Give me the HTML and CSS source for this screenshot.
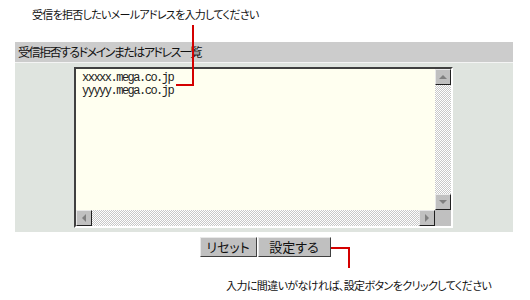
FILE: index.html
```html
<!DOCTYPE html>
<html>
<head>
    <title>受信拒否設定</title>
    <link rel="stylesheet" href="styles.css">
</head>
<body>
    <div class="page">
        <p class="note note-top">受信を拒否したいメールアドレスを入力してください</p>

        <div class="list">
            <div class="list-head">受信拒否するドメインまたはアドレス一覧</div>
            <div class="list-body">
                <div class="box">
                    <div class="box-text">xxxxx.mega.co.jp<br>yyyyy.mega.co.jp</div>
                    <div class="vbar">
                        <span class="sbtn"><span class="arr arr-up"></span></span>
                        <span class="track"></span>
                        <span class="sbtn"><span class="arr arr-down"></span></span>
                    </div>
                    <div class="hbar">
                        <span class="sbtn"><span class="arr arr-left"></span></span>
                        <span class="track"></span>
                        <span class="sbtn"><span class="arr arr-right"></span></span>
                    </div>
                    <div class="corner"></div>
                </div>
            </div>
        </div>

        <div class="actions">
            <button class="btn btn-reset">リセット</button>
            <button class="btn btn-submit">設定する</button>
        </div>

        <p class="note note-bottom">入力に間違いがなければ、設定ボタンをクリックしてください</p>

        <!-- callout lines -->
        <div class="line line-a1"></div>
        <div class="line line-a2"></div>
        <div class="line line-b1"></div>
        <div class="line line-b2"></div>
    </div>
</body>
</html>
```

FILE: styles.css
```css
body {
    margin: 0;
    background: #fff;
    font-family: "Noto Sans CJK JP", sans-serif;
    color: #000;
}

.page {
    position: relative;
    width: 530px;
    height: 300px;
}

.note {
    margin: 0;
    font-size: 11px;
    line-height: 14px;
    font-feature-settings: "palt";
    letter-spacing: -0.7px;
    color: #111;
}

.note-top {
    padding: 7px 0 0 32px;
    height: 14px;
}

.list {
    margin: 21px 0 0 15px;
    width: 498px;
}

.list-head {
    height: 20px;
    line-height: 20px;
    padding-left: 3px;
    background: #cccccc;
    border-bottom: 1px solid #f4f4f4;
    font-size: 12px;
    letter-spacing: -1.5px;
    font-feature-settings: "palt";
    color: #111;
}

.list-body {
    background: #dfe4df;
    padding: 4px 0 4px 59px;
}

.box {
    width: 375px;
    height: 157px;
    border: 2px solid;
    border-color: #404040 #ffffff #ffffff #404040;
    background: #fffff0;
    display: grid;
    grid-template-columns: 1fr 16px;
    grid-template-rows: 1fr 16px;
}

.box-text {
    padding: 3px 0 0 6px;
    font-family: "Liberation Mono", monospace;
    font-size: 12px;
    line-height: 13px;
    letter-spacing: -1.5px;
    color: #222;
}

.vbar,
.hbar {
    display: flex;
    background: repeating-conic-gradient(#c8c8c8 0 25%, #ffffff 0 50%) 0 0 / 2px 2px;
}

.vbar {
    flex-direction: column;
}

.track {
    flex: 1;
}

.sbtn {
    width: 16px;
    height: 16px;
    box-sizing: border-box;
    background: #c0c0c0;
    border: 1px solid;
    border-color: #e8e8e8 #202020 #202020 #e8e8e8;
    display: flex;
    align-items: center;
    justify-content: center;
}

.arr {
    width: 0;
    height: 0;
}

.arr-up {
    border-left: 4px solid transparent;
    border-right: 4px solid transparent;
    border-bottom: 4px solid #808080;
}

.arr-down {
    border-left: 4px solid transparent;
    border-right: 4px solid transparent;
    border-top: 4px solid #808080;
}

.arr-left {
    border-top: 4px solid transparent;
    border-bottom: 4px solid transparent;
    border-right: 4px solid #808080;
}

.arr-right {
    border-top: 4px solid transparent;
    border-bottom: 4px solid transparent;
    border-left: 4px solid #808080;
}

.corner {
    background: #c0c0c0;
}

.actions {
    display: flex;
    justify-content: center;
    gap: 1px;
    margin-top: 5px;
}

.btn {
    height: 20px;
    padding: 0;
    font-family: "Noto Sans CJK JP", sans-serif;
    font-size: 13px;
    line-height: 16px;
    font-feature-settings: "palt";
    color: #111;
    background: #c0c0c0;
    border: 1px solid;
    border-color: #e8e8e8 #404040 #404040 #e8e8e8;
}

.btn-reset {
    width: 57px;
}

.btn-submit {
    width: 73px;
}

.note-bottom {
    padding: 21px 0 0 226px;
    letter-spacing: -0.6px;
}

.line {
    position: absolute;
    background: #d40000;
}

.line-a1 {
    left: 192px;
    top: 25px;
    width: 2px;
    height: 61px;
}

.line-a2 {
    left: 176px;
    top: 84px;
    width: 18px;
    height: 2px;
}

.line-b1 {
    left: 331px;
    top: 247px;
    width: 19px;
    height: 2px;
}

.line-b2 {
    left: 348px;
    top: 247px;
    width: 2px;
    height: 21px;
}
```
